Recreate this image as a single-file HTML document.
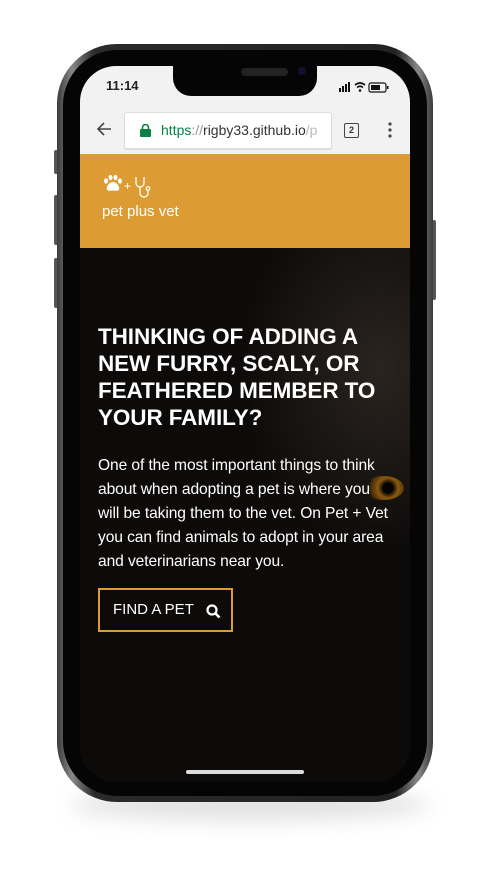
<!DOCTYPE html>
<html><head><style>
body{margin:0;width:500px;height:872px;background:#fff;position:relative;overflow:hidden;font-family:"Liberation Sans",sans-serif}
.shadow{position:absolute;left:70px;top:790px;width:360px;height:30px;border-radius:50%;background:rgba(0,0,0,.12);filter:blur(10px)}
.phone{position:absolute;left:57px;top:44px;width:376px;height:758px;border-radius:60px;background:linear-gradient(90deg,#3a3a3a,#888 4%,#2a2a2a 10%,#222 90%,#888 96%,#3a3a3a);}
.bezel{position:absolute;left:6px;top:6px;right:6px;bottom:6px;border-radius:55px;background:#050505}
.btn{position:absolute;background:#555;width:4px;border-radius:2px}
.screen{position:absolute;left:80px;top:66px;width:330px;height:716px;border-radius:36px;overflow:hidden;background:#0a0a0a}
.notch{position:absolute;left:93px;top:0;width:144px;height:30px;background:#050505;border-radius:0 0 18px 18px}
.top{position:absolute;left:0;top:0;width:330px;height:88px;background:#f2f2f2}
.url{position:absolute;left:44px;top:46px;width:206px;height:35px;background:#fff;border:1px solid #ddd;border-radius:3px;box-shadow:0 1px 1px rgba(0,0,0,.1);font-size:14px;line-height:35px}
.hdr{position:absolute;left:0;top:88px;width:330px;height:94px;background:#dd9c33}
.hero{position:absolute;left:0;top:182px;width:330px;height:534px;background:radial-gradient(ellipse 200px 260px at 300px 120px,#2a2420,#0d0b0a 70%),#0a0a0a}
h1{position:absolute;left:18px;top:75px;margin:0;color:#fff;font-size:22.5px;line-height:27px;font-weight:bold;letter-spacing:-.1px;white-space:nowrap}
p{position:absolute;left:18px;top:206px;margin:0;color:#fff;font-size:15.6px;line-height:24px;letter-spacing:-.1px;white-space:nowrap}
.find{position:absolute;left:18px;top:340px;width:135px;height:44px;border:2px solid #dd9c33;box-sizing:border-box;color:#fff;font-size:15px;line-height:40px;padding-left:13px}
.eye{position:absolute;left:284px;top:228px;width:40px;height:24px;border-radius:50%;background:radial-gradient(circle at 60% 50%,#000 18%,#a0650c 38%,#4a3008 65%,transparent 72%);opacity:.85}
.home{position:absolute;left:106px;top:704px;width:118px;height:4px;border-radius:2px;background:#ddd}
</style></head><body>
<div class="shadow"></div>
<div class="btn" style="left:54px;top:150px;height:24px"></div>
<div class="btn" style="left:54px;top:195px;height:50px"></div>
<div class="btn" style="left:54px;top:258px;height:50px"></div>
<div class="btn" style="left:432px;top:220px;height:80px"></div>
<div class="phone"><div class="bezel"></div></div>
<div class="screen">
 <div class="top">
  <div style="position:absolute;left:26px;top:12px;font-size:13px;font-weight:bold;color:#222">11:14</div>
  <div style="position:absolute;left:259px;top:15px;font-size:11px;color:#111;letter-spacing:1px">
   <svg width="60" height="12"><rect x="0" y="7" width="2" height="4" fill="#111"/><rect x="3" y="5" width="2" height="6" fill="#111"/><rect x="6" y="3" width="2" height="8" fill="#111"/><rect x="9" y="1" width="2" height="10" fill="#111"/><path d="M16 4 Q21 0 26 4 M18 6.5 Q21 4 24 6.5" stroke="#111" stroke-width="1.6" fill="none"/><circle cx="21" cy="9.5" r="1.3" fill="#111"/><rect x="30" y="2" width="17" height="9" rx="2" fill="none" stroke="#111" stroke-width="1.2"/><rect x="32" y="4" width="9" height="5" fill="#111"/><rect x="48" y="5" width="1.5" height="3" fill="#111"/></svg>
  </div>
  <svg style="position:absolute;left:16px;top:56px" width="16" height="14"><path d="M15 7H2M8 1L2 7l6 6" stroke="#444" stroke-width="1.6" fill="none"/></svg>
  <div class="url"><svg style="position:absolute;left:15px;top:11px" width="11" height="13"><rect x="0" y="5" width="11" height="8" rx="1" fill="#0b8043"/><path d="M2.5 5V3.5a3 3 0 0 1 6 0V5" stroke="#0b8043" stroke-width="1.6" fill="none"/></svg><span style="position:absolute;left:36px;white-space:nowrap"><span style="color:#0b8043">https</span><span style="color:#999">://</span><span style="color:#333">rigby33.github.io</span><span style="color:#bbb">/p</span></span></div>
  <div style="position:absolute;left:264px;top:57px;width:13px;height:13px;border:1.6px solid #444;border-radius:2px;font-size:9px;line-height:13px;text-align:center;color:#333;font-weight:bold">2</div>
  <svg style="position:absolute;left:308px;top:56px" width="4" height="16"><circle cx="2" cy="2" r="1.6" fill="#444"/><circle cx="2" cy="8" r="1.6" fill="#444"/><circle cx="2" cy="14" r="1.6" fill="#444"/></svg>
 </div>
 <div class="notch"><div style="position:absolute;left:68px;top:2px;width:47px;height:8px;border-radius:4px;background:#222"></div><div style="position:absolute;left:125px;top:1px;width:8px;height:8px;border-radius:50%;background:#113"></div></div>
 <div class="hdr">
  <svg style="position:absolute;left:22px;top:20px" width="50" height="28"><g fill="#fff"><ellipse cx="4" cy="7" rx="2" ry="2.6"/><ellipse cx="8.5" cy="3.5" rx="2" ry="2.6"/><ellipse cx="13.5" cy="3.5" rx="2" ry="2.6"/><ellipse cx="18" cy="7" rx="2" ry="2.6"/><path d="M11 8c-4 0-7 5-6 7.5 1 2 4 1 6 1s5 1 6-1c1-2.5-2-7.5-6-7.5z"/></g><text x="22" y="16" fill="#fff" font-size="12" font-family="Liberation Sans">+</text><path d="M34 3v6a4 4 0 0 0 8 0V3M38 13v6a4 4 0 0 0 8 0v-3" stroke="#fff" stroke-width="1.3" fill="none"/><circle cx="46" cy="14.5" r="1.8" fill="none" stroke="#fff" stroke-width="1.2"/></svg>
  <div style="position:absolute;left:22px;top:49px;color:#fff;font-size:15px">pet plus vet</div>
 </div>
 <div class="hero">
  <div class="eye"></div>
  <h1>THINKING OF ADDING A<br>NEW FURRY, SCALY, OR<br>FEATHERED MEMBER TO<br>YOUR FAMILY?</h1>
  <p>One of the most important things to think<br>about when adopting a pet is where you<br>will be taking them to the vet. On Pet + Vet<br>you can find animals to adopt in your area<br>and veterinarians near you.</p>
  <div class="find">FIND A PET <svg style="position:absolute;left:106px;top:14px" width="15" height="15"><circle cx="6" cy="6" r="4.5" stroke="#fff" stroke-width="2.2" fill="none"/><path d="M9.5 9.5L13.5 13.5" stroke="#fff" stroke-width="2.6"/></svg></div>
 </div>
 <div class="home"></div>
</div>
</body></html>
